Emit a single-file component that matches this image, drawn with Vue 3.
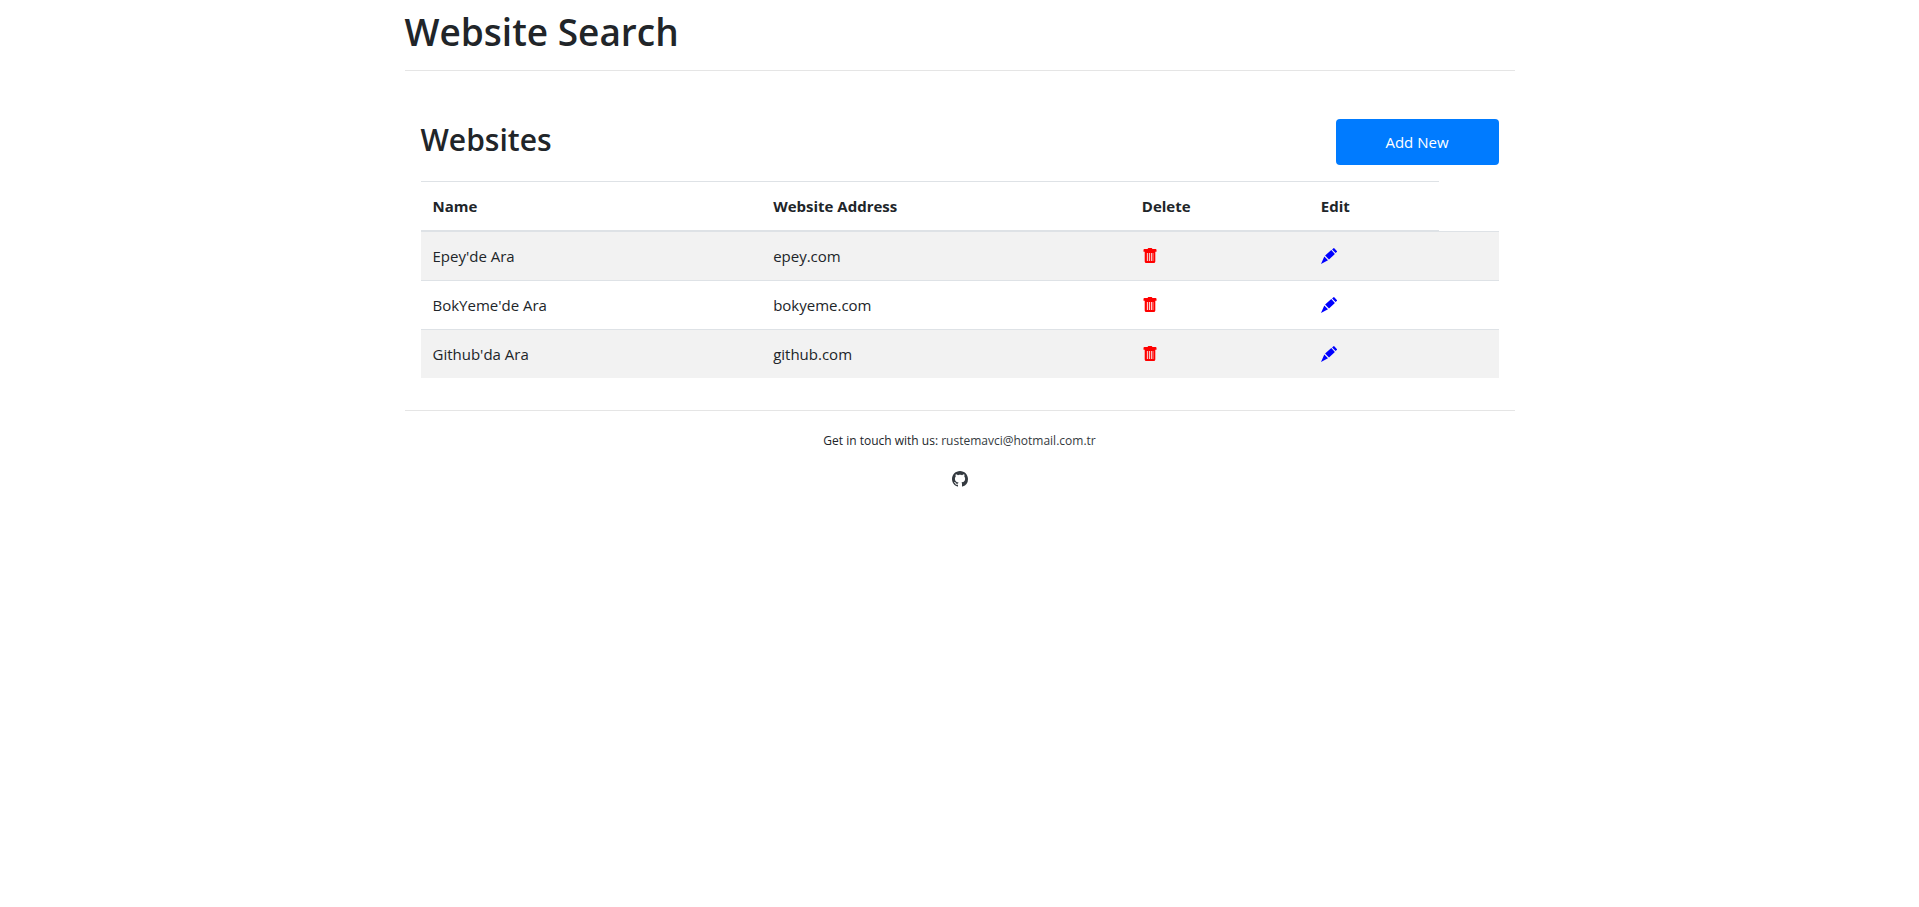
<script setup>
import { ref } from 'vue'

const websites = ref([
  { name: "Epey'de Ara", address: 'epey.com' },
  { name: "BokYeme'de Ara", address: 'bokyeme.com' },
  { name: "Github'da Ara", address: 'github.com' },
])

function remove(index) {
  websites.value.splice(index, 1)
}
</script>

<template>
  <div class="container">
    <header class="page-header">
      <h1>Website Search</h1>
    </header>

    <main class="content">
      <div class="toolbar">
        <h2>Websites</h2>
        <button type="button" class="btn-add">Add New</button>
      </div>

      <table class="sites">
        <colgroup>
          <col class="col-name" />
          <col class="col-address" />
          <col class="col-delete" />
          <col class="col-edit" />
          <col />
        </colgroup>
        <thead>
          <tr>
            <th scope="col">Name</th>
            <th scope="col">Website Address</th>
            <th scope="col">Delete</th>
            <th scope="col">Edit</th>
          </tr>
        </thead>
        <tbody>
          <tr v-for="(site, index) in websites" :key="site.address">
            <td>{{ site.name }}</td>
            <td>{{ site.address }}</td>
            <td>
              <button type="button" class="icon-btn delete" :aria-label="'Delete ' + site.name" @click="remove(index)">
                <svg viewBox="0 0 16 16" width="16" height="16" aria-hidden="true">
                  <path
                    fill="currentColor"
                    fill-rule="evenodd"
                    d="M6.500 0h3q.8 0 .8 1H13.600q.9 0 .9.9V3.700H13.300V13.400Q13.300 15 11.700 15H4.300Q2.700 15 2.700 13.400V3.700H1.500V1.900Q1.500 1 2.400 1H5.700Q5.700 0 6.500 0ZM4.900 5V13H5.800V5ZM6.900 5V13H7.800V5ZM8.900 5V13H9.800V5ZM10.700 5V13H11.300V5Z"
                  />
                </svg>
              </button>
            </td>
            <td>
              <button type="button" class="icon-btn edit" :aria-label="'Edit ' + site.name">
                <svg viewBox="0 0 16 16" width="16" height="16" aria-hidden="true">
                  <path
                    fill="currentColor"
                    d="M12.200.4q.7-.6 1.300 0l2.300 2.500q.5.600-.1 1.200l-1.100 1-3.500-3.700ZM10.300 2.100l3.600 3.900-5.900 5.500-3.900-4ZM3.300 8.600l3.700 3.700L0 15.900Z"
                  />
                </svg>
              </button>
            </td>
            <td></td>
          </tr>
        </tbody>
      </table>
    </main>

    <footer class="page-footer">
      <p>Get in touch with us: <a href="mailto:rustemavci@hotmail.com.tr">rustemavci@hotmail.com.tr</a></p>
      <a class="github" href="#" aria-label="GitHub">
        <svg viewBox="0 0 16 16" width="16" height="16" aria-hidden="true">
          <path
            fill="currentColor"
            d="M8 0C3.580 0 0 3.580 0 8c0 3.540 2.290 6.530 5.470 7.590.4.070.55-.17.55-.38 0-.19-.01-.82-.01-1.490-2.010.37-2.530-.49-2.690-.94-.09-.23-.48-.94-.82-1.130-.28-.15-.68-.52-.01-.53.63-.01 1.080.58 1.230.82.72 1.210 1.870.87 2.330.66.07-.52.28-.87.51-1.070-1.780-.2-3.640-.89-3.640-3.950 0-.87.31-1.590.82-2.150-.08-.2-.36-1.020.08-2.120 0 0 .67-.21 2.200.82.64-.18 1.320-.27 2-.27s1.360.09 2 .27c1.530-1.040 2.200-.82 2.200-.82.44 1.100.16 1.920.08 2.120.51.56.82 1.270.82 2.150 0 3.070-1.870 3.750-3.650 3.950.29.25.54.73.54 1.480 0 1.070-.01 1.930-.01 2.200 0 .21.15.46.55.38A8.010 8.010 0 0 0 16 8c0-4.420-3.580-8-8-8Z"
          />
        </svg>
      </a>
    </footer>
  </div>
</template>

<style>
body {
  background: #fff;
}
</style>

<style scoped>
.container {
  box-sizing: border-box;
  max-width: 1140px;
  margin: 0 auto;
  padding: 0 15px;
  color: #212529;
  font: 400 15px/24px 'Open Sans', 'Noto Sans', sans-serif;
}

h1,
h2 {
  margin: 0;
  font-weight: 600;
}

.page-header {
  padding: 8px 0 14px;
  border-bottom: 1px solid #e5e5e5;
}

h1 {
  font-size: 37px;
  line-height: 48px;
}

.content {
  padding: 48px 16px 32px;
}

.toolbar {
  display: flex;
  justify-content: space-between;
  align-items: flex-start;
  margin-bottom: 16px;
}

h2 {
  font-size: 30px;
  line-height: 42px;
}

.btn-add {
  width: 163px;
  height: 46px;
  border: 0;
  border-radius: 4px;
  background: #007bff;
  color: #fff;
  font: inherit;
  cursor: pointer;
}

.sites {
  width: 100%;
  table-layout: fixed;
  border-collapse: collapse;
}

.col-name {
  width: 31.6%;
}

.col-address {
  width: 34.2%;
}

.col-delete {
  width: 16.6%;
}

.col-edit {
  width: 12.1%;
}

th,
td {
  padding: 12px;
  border-top: 1px solid #dee2e6;
  text-align: left;
  vertical-align: top;
}

th {
  border-bottom: 2px solid #dee2e6;
  font-weight: 700;
}

tbody tr:nth-child(odd) {
  background: #f2f2f2;
}

.icon-btn {
  display: block;
  padding: 4px 0;
  border: 0;
  background: none;
  cursor: pointer;
}

.icon-btn svg,
.github svg {
  display: block;
}

.delete {
  color: #f00;
}

.edit {
  color: #00f;
}

.page-footer {
  display: flex;
  flex-direction: column;
  align-items: center;
  gap: 20px;
  padding-top: 19px;
  border-top: 1px solid #e5e5e5;
  font-size: 12px;
  line-height: 21px;
}

.page-footer p {
  margin: 0;
}

.page-footer a {
  color: #343a40;
  text-decoration: none;
}
</style>
